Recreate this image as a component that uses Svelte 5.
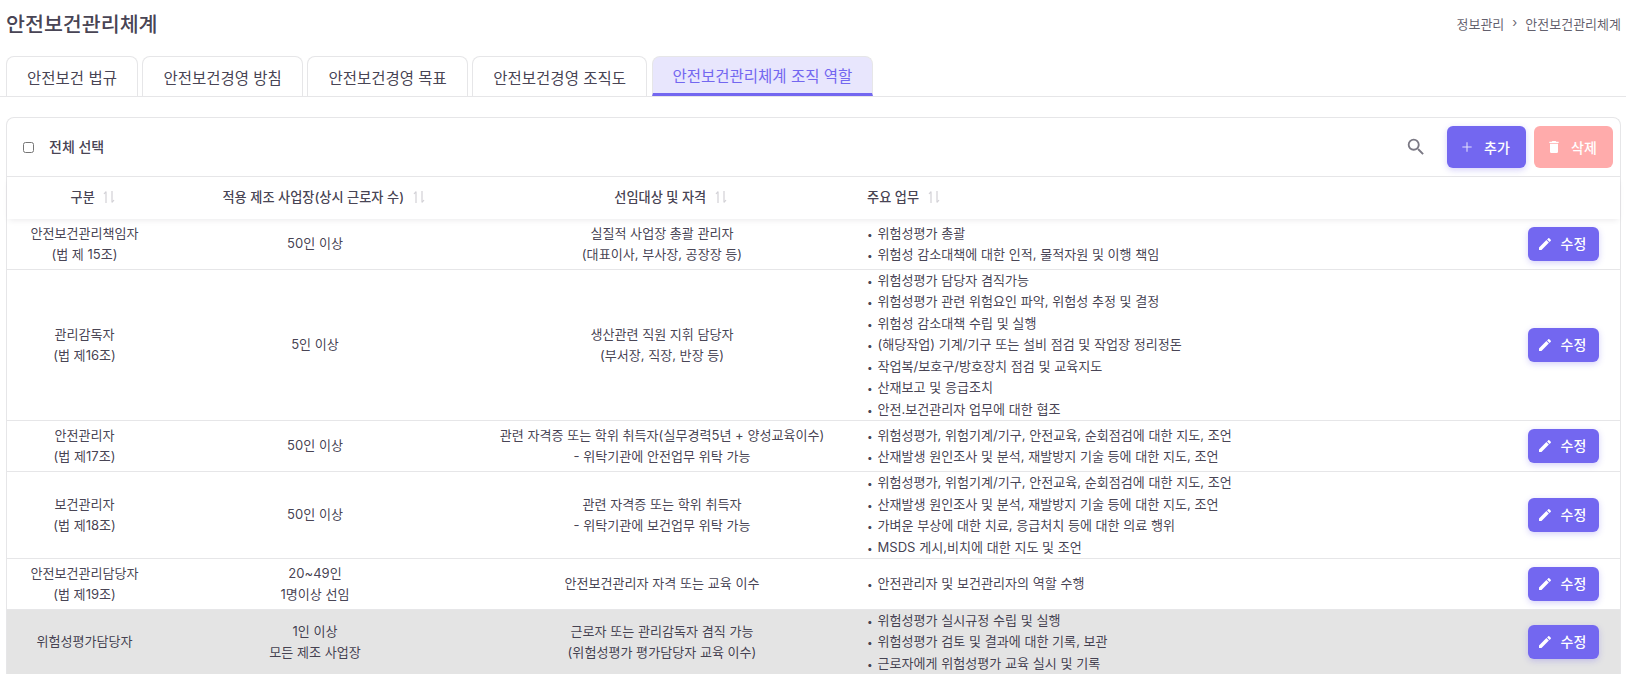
<script>
  const tabs = [
    '안전보건 법규',
    '안전보건경영 방침',
    '안전보건경영 목표',
    '안전보건경영 조직도',
    '안전보건관리체계 조직 역할'
  ];

  const columns = [
    { label: '구분' },
    { label: '적용 제조 사업장(상시 근로자 수)' },
    { label: '선임대상 및 자격' },
    { label: '주요 업무', left: true }
  ];

  const rows = [
    {
      name: ['안전보건관리책임자', '(법 제 15조)'],
      scope: ['50인 이상'],
      target: ['실질적 사업장 총괄 관리자', '(대표이사, 부사장, 공장장 등)'],
      duties: ['위험성평가 총괄', '위험성 감소대책에 대한 인적, 물적자원 및 이행 책임']
    },
    {
      name: ['관리감독자', '(법 제16조)'],
      scope: ['5인 이상'],
      target: ['생산관련 직원 지휘 담당자', '(부서장, 직장, 반장 등)'],
      duties: [
        '위험성평가 담당자 겸직가능',
        '위험성평가 관련 위험요인 파악, 위험성 추정 및 결정',
        '위험성 감소대책 수립 및 실행',
        '(해당작업) 기계/기구 또는 설비 점검 및 작업장 정리정돈',
        '작업복/보호구/방호장치 점검 및 교육지도',
        '산재보고 및 응급조치',
        '안전.보건관리자 업무에 대한 협조'
      ]
    },
    {
      name: ['안전관리자', '(법 제17조)'],
      scope: ['50인 이상'],
      target: ['관련 자격증 또는 학위 취득자(실무경력5년 + 양성교육이수)', '- 위탁기관에 안전업무 위탁 가능'],
      duties: ['위험성평가, 위험기계/기구, 안전교육, 순회점검에 대한 지도, 조언', '산재발생 원인조사 및 분석, 재발방지 기술 등에 대한 지도, 조언']
    },
    {
      name: ['보건관리자', '(법 제18조)'],
      scope: ['50인 이상'],
      target: ['관련 자격증 또는 학위 취득자', '- 위탁기관에 보건업무 위탁 가능'],
      duties: [
        '위험성평가, 위험기계/기구, 안전교육, 순회점검에 대한 지도, 조언',
        '산재발생 원인조사 및 분석, 재발방지 기술 등에 대한 지도, 조언',
        '가벼운 부상에 대한 치료, 응급처치 등에 대한 의료 행위',
        'MSDS 게시,비치에 대한 지도 및 조언'
      ]
    },
    {
      name: ['안전보건관리담당자', '(법 제19조)'],
      scope: ['20~49인', '1명이상 선임'],
      target: ['안전보건관리자 자격 또는 교육 이수'],
      duties: ['안전관리자 및 보건관리자의 역할 수행']
    },
    {
      name: ['위험성평가담당자'],
      scope: ['1인 이상', '모든 제조 사업장'],
      target: ['근로자 또는 관리감독자 겸직 가능', '(위험성평가 평가담당자 교육 이수)'],
      duties: ['위험성평가 실시규정 수립 및 실행', '위험성평가 검토 및 결과에 대한 기록, 보관', '근로자에게 위험성평가 교육 실시 및 기록'],
      hover: true
    }
  ];
</script>

<div class="page">
  <header class="page-head">
    <h1>안전보건관리체계</h1>
    <nav class="crumbs" aria-label="breadcrumb">
      <span>정보관리</span>
      <span class="crumbs__sep">›</span>
      <span>안전보건관리체계</span>
    </nav>
  </header>

  <div class="tabs">
    {#each tabs as tab, i}
      <button class="tab" class:active={i === tabs.length - 1} type="button">{tab}</button>
    {/each}
  </div>

  <section class="card">
    <div class="toolbar">
      <label class="select-all">
        <input type="checkbox" />
        <span>전체 선택</span>
      </label>
      <div class="toolbar__actions">
        <svg class="search" viewBox="0 0 24 24" aria-hidden="true">
          <path d="M9.5,3A6.5,6.5 0 0,1 16,9.5C16,11.11 15.41,12.59 14.44,13.73L14.71,14H15.5L20.5,19L19,20.5L14,15.5V14.71L13.73,14.44C12.59,15.41 11.11,16 9.5,16A6.5,6.5 0 0,1 3,9.5A6.5,6.5 0 0,1 9.5,3M9.5,5C7,5 5,7 5,9.5C5,12 7,14 9.5,14C12,14 14,12 14,9.5C14,7 12,5 9.5,5Z" />
        </svg>
        <button class="btn btn--lg" type="button">
          <svg class="icon thin" viewBox="0 0 24 24" aria-hidden="true"><path d="M12 5v14M5 12h14" /></svg>
          추가
        </button>
        <button class="btn btn--lg btn--danger" type="button">
          <svg class="icon" viewBox="0 0 24 24" aria-hidden="true">
            <path d="M19,4H15.5L14.5,3H9.5L8.5,4H5V6H19M6,19A2,2 0 0,0 8,21H16A2,2 0 0,0 18,19V7H6V19Z" />
          </svg>
          삭제
        </button>
      </div>
    </div>

    <table>
      <colgroup>
        <col class="col-name" />
        <col class="col-scope" />
        <col class="col-target" />
        <col />
        <col class="col-action" />
      </colgroup>
      <thead>
        <tr>
          {#each columns as col}
            <th class:left={col.left}>
              {col.label}
              <svg class="sort" viewBox="0 0 14 14" aria-hidden="true">
                <path d="M4 13V1.5M4 1.5 2 4M10 1v11.5M10 12.5 12 10" />
              </svg>
            </th>
          {/each}
          <th></th>
        </tr>
      </thead>
      <tbody>
        {#each rows as row}
          <tr class:hover={row.hover}>
            <td>{#each row.name as line}<div>{line}</div>{/each}</td>
            <td>{#each row.scope as line}<div>{line}</div>{/each}</td>
            <td>{#each row.target as line}<div>{line}</div>{/each}</td>
            <td class="left">
              {#each row.duties as line}<div><span class="dot">•</span>{line}</div>{/each}
            </td>
            <td class="action">
              <button class="btn btn--sm" type="button">
                <svg class="icon" viewBox="0 0 24 24" aria-hidden="true">
                  <path d="M20.71,7.04C21.1,6.65 21.1,6 20.71,5.63L18.37,3.29C18,2.9 17.35,2.9 16.96,3.29L15.12,5.12L18.87,8.87M3,17.25V21H6.75L17.81,9.93L14.06,6.18L3,17.25Z" />
                </svg>
                수정
              </button>
            </td>
          </tr>
        {/each}
      </tbody>
    </table>
  </section>
</div>

<style>
  :global(html),
  :global(body) {
    overflow: hidden;
    background: #fff;
  }

  .page {
    font-family: Inter, "Noto Sans CJK KR", sans-serif;
    color: rgba(47, 43, 61, 0.9);
    height: 675px;
  }

  .page-head {
    display: flex;
    align-items: center;
    justify-content: space-between;
    height: 56px;
    padding: 0 5px 10px 6px;
    box-sizing: border-box;
  }

  h1 {
    margin: 0;
    font-size: 20.6px;
    font-weight: 500;
  }

  .crumbs {
    display: flex;
    gap: 8px;
    font-size: 13px;
    color: rgba(47, 43, 61, 0.75);
  }

  .tabs {
    display: flex;
    gap: 4.5px;
    height: 41px;
    box-sizing: border-box;
    padding-left: 6px;
    border-bottom: 1px solid #e6e6e8;
  }

  .tab {
    height: 40px;
    padding: 0 20px;
    border: 1px solid #e6e6e8;
    border-bottom: 0;
    border-radius: 8px 8px 0 0;
    background: #fff;
    font: inherit;
    font-size: 15.5px;
    color: inherit;
  }

  .tab.active {
    background: #e8e6fd;
    color: #7367f0;
    border-bottom: 3px solid #7367f0;
  }

  .card {
    margin: 20px 5px 0 6px;
    border: 1px solid #e6e6e8;
    border-bottom: 0;
    border-radius: 8px 8px 0 0;
  }

  .toolbar {
    display: flex;
    align-items: center;
    justify-content: space-between;
    height: 58px;
    padding: 0 7px 0 16px;
  }

  .select-all {
    display: flex;
    align-items: center;
    gap: 15px;
    font-size: 14px;
    font-weight: 500;
  }

  .select-all span {
    margin-top: -2px;
  }

  .select-all input {
    width: 11px;
    height: 13px;
    margin: 0;
  }

  .toolbar__actions {
    display: flex;
    align-items: center;
    gap: 8px;
  }

  .search {
    width: 22px;
    height: 22px;
    margin-right: 12px;
    fill: #7b7984;
  }

  .btn {
    display: inline-flex;
    align-items: center;
    justify-content: center;
    border: 0;
    border-radius: 6px;
    background: #7367f0;
    color: #fff;
    font: inherit;
    font-weight: 500;
    box-shadow: 0 2px 6px rgba(115, 103, 240, 0.3);
  }

  .btn--lg {
    width: 79px;
    height: 42px;
    gap: 9px;
    padding: 0 4px 0 0;
    font-size: 14px;
  }

  .btn--sm {
    width: 71px;
    height: 34px;
    gap: 8px;
    padding: 0 4px 0 0;
    font-size: 14px;
  }

  .btn--danger {
    background: #ffabab;
    box-shadow: none;
  }

  .icon {
    width: 16px;
    height: 16px;
    fill: currentColor;
  }

  .icon.thin {
    fill: none;
    stroke: currentColor;
    stroke-width: 1.6;
    opacity: 0.8;
  }

  table {
    width: 100%;
    border-collapse: collapse;
    table-layout: fixed;
    font-size: 13.07px;
    line-height: 21.45px;
  }

  .col-name { width: 155px; }
  .col-scope { width: 306px; }
  .col-target { width: 388px; }
  .col-action { width: 162px; }

  thead tr {
    border-top: 1px solid #e6e6e8;
    box-shadow: 0 3px 6px -2px rgba(47, 43, 61, 0.1);
  }

  th {
    height: 42px;
    padding: 0 0 0 18px;
    font-size: 13.2px;
    font-weight: 500;
    text-align: center;
  }

  th.left,
  td.left {
    text-align: left;
    padding-left: 11px;
  }

  .dot {
    display: inline-block;
    width: 10.5px;
    font-size: 10px;
    line-height: 1;
  }

  .sort {
    width: 14px;
    height: 14px;
    margin-left: 4px;
    vertical-align: -2px;
    fill: none;
    stroke: #d2d1d6;
    stroke-width: 1.2;
  }

  td {
    height: 50px;
    padding: 0;
    text-align: center;
    border-bottom: 1px solid #e6e6e8;
  }

  tr.hover td {
    background: #e4e4e4;
    border-bottom: 0;
  }

  td.action {
    text-align: right;
    padding-right: 21px;
  }

  td.action .btn {
    vertical-align: middle;
  }
</style>
